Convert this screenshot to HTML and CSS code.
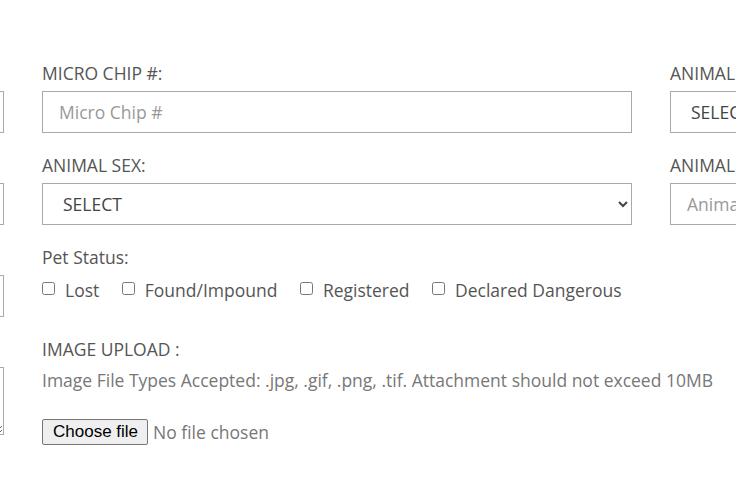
FILE: index.html
```html
<!DOCTYPE html>
<html lang="en">
<head>
<meta charset="utf-8">
<title>Pet Registration</title>
<link rel="stylesheet" href="styles.css">
</head>
<body>
<form class="form-grid">
  <div class="group">
    <label class="lbl">OWNER NAME:</label>
    <input class="ctrl" type="text" placeholder="Owner Name">
  </div>
  <div class="group">
    <label class="lbl">MICRO CHIP #:</label>
    <input class="ctrl" type="text" placeholder="Micro Chip #">
  </div>
  <div class="group">
    <label class="lbl">ANIMAL TYPE:</label>
    <select class="ctrl sel">
      <option>SELECT</option>
    </select>
  </div>

  <div class="group">
    <label class="lbl">ANIMAL NAME:</label>
    <input class="ctrl" type="text" placeholder="Animal Name">
  </div>
  <div class="group">
    <label class="lbl">ANIMAL SEX:</label>
    <select class="ctrl sel">
      <option>SELECT</option>
      <option>MALE</option>
      <option>FEMALE</option>
    </select>
  </div>
  <div class="group">
    <label class="lbl">ANIMAL BREED:</label>
    <input class="ctrl" type="text" placeholder="Animal Breed">
  </div>

  <div class="group">
    <label class="lbl">ANIMAL COLOR:</label>
    <input class="ctrl" type="text" placeholder="Animal Color">
  </div>
  <div class="group">
    <div class="lbl">Pet Status:</div>
    <div class="checks">
      <label class="check"><input type="checkbox"> Lost</label>
      <label class="check"><input type="checkbox"> Found/Impound</label>
      <label class="check"><input type="checkbox"> Registered</label>
      <label class="check"><input type="checkbox"> Declared Dangerous</label>
    </div>
  </div>
  <div class="group"></div>

  <div class="group">
    <label class="lbl">DESCRIPTION:</label>
    <textarea class="ctrl area" placeholder="Description"></textarea>
  </div>
  <div class="group">
    <div class="lbl">IMAGE UPLOAD :</div>
    <p class="help">Image File Types Accepted: .jpg, .gif, .png, .tif. Attachment should not exceed 10MB</p>
    <div class="file-row">
      <label class="file-btn">Choose file<input class="file-input" type="file"></label>
      <span class="file-name">No file chosen</span>
    </div>
  </div>
  <div class="group"></div>
</form>
</body>
</html>
```

FILE: styles.css
```css
html, body {
  margin: 0;
  padding: 0;
  background: #fff;
  overflow: hidden;
}
body {
  font-family: "Open Sans", "Liberation Sans", sans-serif;
  font-size: 17.5px;
  color: #555;
}
.form-grid {
  display: grid;
  grid-template-columns: 590px 590px 590px;
  column-gap: 38px;
  row-gap: 20px;
  align-items: start;
  margin-left: -586px;
  padding-top: 61px;
  width: 1846px;
}
.group {
  display: flex;
  flex-direction: column;
  min-width: 0;
}
.lbl {
  display: block;
  line-height: 24px;
  margin-bottom: 6px;
  color: #555;
  white-space: nowrap;
}
.ctrl {
  box-sizing: border-box;
  height: 42px;
  width: 100%;
  border: 1px solid #a9a9a9;
  border-radius: 0;
  padding: 0 16px;
  font-family: "Open Sans", "Liberation Sans", sans-serif;
  font-size: 17.5px;
  color: #444;
  background: #fff;
  margin: 0;
}
.ctrl::placeholder {
  color: #999;
}
.sel {
  padding-left: 16px;
}
.area {
  height: 68px;
  padding-top: 8px;
  resize: both;
}
.checks {
  display: flex;
  gap: 22.5px;
  height: 42px;
  padding-top: 3px;
  box-sizing: border-box;
  line-height: 24px;
  white-space: nowrap;
}
.check {
  display: flex;
  align-items: center;
  height: 24px;
  color: #555;
}
.check input {
  width: 13px;
  height: 13px;
  margin: 0 10px 0 0;
  position: relative;
  top: -2px;
}
.help {
  margin: 1px 0 0;
  line-height: 24px;
  color: #777;
  white-space: nowrap;
}
.file-row {
  display: flex;
  align-items: center;
  gap: 5px;
  margin-top: 27px;
  height: 26px;
}
.file-btn {
  box-sizing: border-box;
  display: inline-flex;
  align-items: center;
  height: 26px;
  padding: 0 9px 0 10px;
  font-family: "Liberation Sans", Arial, sans-serif;
  font-size: 17px;
  color: #000;
  border: 1px solid #767676;
  border-radius: 2px;
  background: #efefef;
  cursor: default;
}
.file-input {
  display: none;
}
.file-name {
  color: #777;
  line-height: 24px;
}
```
